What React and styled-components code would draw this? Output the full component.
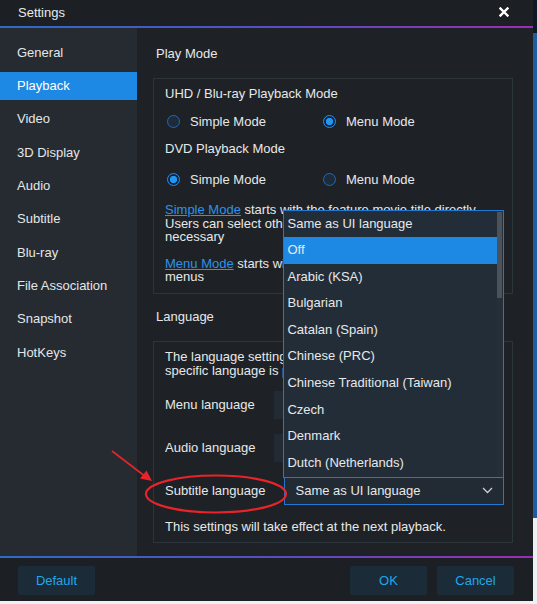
import React from 'react';
import styled, { createGlobalStyle } from 'styled-components';

const GlobalStyle = createGlobalStyle`
    html, body {
        margin: 0;
        padding: 0;
    }
    body {
        width: 537px;
        height: 604px;
        overflow: hidden;
        font-family: "Liberation Sans", Arial, sans-serif;
        background: linear-gradient(to bottom, #0f1826 0px, #0f1826 33px, #1f5c9f 33px, #1f5c9f 518px, #eef0f2 518px);
    }
`

const menuItems = ['General', 'Playback', 'Video', '3D Display', 'Audio', 'Subtitle', 'Blu-ray', 'File Association', 'Snapshot', 'HotKeys']

const languages = [
    'Same as UI language', 'Off', 'Arabic (KSA)', 'Bulgarian', 'Catalan (Spain)',
    'Chinese (PRC)', 'Chinese Traditional (Taiwan)', 'Czech', 'Denmark', 'Dutch (Netherlands)',
]

function Radio({ checked, label }) {
    return (
        <RadioOption>
            <RadioCircle checked={checked} />
            <span>{label}</span>
        </RadioOption>
    )
}

function App() {
    return (
        <>
            <GlobalStyle />
            <Page>
                <Window>
                    <TitleBar>
                        <span>Settings</span>
                        <svg width="10" height="10" viewBox="0 0 10 10">
                            <path d="M1.5 1.5 L8.5 8.5 M8.5 1.5 L1.5 8.5" stroke="#ffffff" strokeWidth="2.4" strokeLinecap="square" />
                        </svg>
                    </TitleBar>
                    <GradientLine />

                    <Body>
                        <Sidebar>
                            {menuItems.map((item) => (
                                <SideItem key={item} active={item === 'Playback'}>{item}</SideItem>
                            ))}
                        </Sidebar>

                        <Content>
                            <SectionTitle>Play Mode</SectionTitle>
                            <GroupBox>
                                <GroupLabel>UHD / Blu-ray Playback Mode</GroupLabel>
                                <RadioRow style={{ marginTop: 9 }}>
                                    <Radio label="Simple Mode" />
                                    <Radio checked label="Menu Mode" />
                                </RadioRow>
                                <GroupLabel style={{ marginTop: 10 }}>DVD Playback Mode</GroupLabel>
                                <RadioRow style={{ marginTop: 12 }}>
                                    <Radio checked label="Simple Mode" />
                                    <Radio label="Menu Mode" />
                                </RadioRow>
                                <Paragraph style={{ marginTop: 14 }}>
                                    <Link>Simple Mode</Link> starts with the feature movie title directly.<br />
                                    Users can select other titles from the menu when<br />
                                    necessary
                                </Paragraph>
                                <Paragraph style={{ marginTop: 13 }}>
                                    <Link>Menu Mode</Link> starts with the disc menu and all disc<br />
                                    menus
                                </Paragraph>
                            </GroupBox>

                            <SectionTitle style={{ marginTop: 15 }}>Language</SectionTitle>
                            <GroupBox compact>
                                <Paragraph lh={14}>
                                    The language settings apply when a disc with the<br />
                                    specific language is played.
                                </Paragraph>
                                <LangRow style={{ marginTop: 13 }}>
                                    <LangLabel>Menu language</LangLabel>
                                    <Select>Same as UI language</Select>
                                </LangRow>
                                <LangRow>
                                    <LangLabel>Audio language</LangLabel>
                                    <Select>Same as UI language</Select>
                                </LangRow>
                                <LangRow>
                                    <LangLabel>Subtitle language</LangLabel>
                                    <Select open>
                                        <span>Same as UI language</span>
                                        <svg width="11" height="7" viewBox="0 0 11 7">
                                            <path d="M1 1 L5.5 5.5 L10 1" fill="none" stroke="#c8ced4" strokeWidth="1.3" />
                                        </svg>
                                        <Dropdown>
                                            {languages.map((lang) => (
                                                <DropItem key={lang} active={lang === 'Off'}>{lang}</DropItem>
                                            ))}
                                            <ScrollTrack>
                                                <ScrollThumb />
                                            </ScrollTrack>
                                        </Dropdown>
                                    </Select>
                                </LangRow>
                                <Paragraph lh={14} style={{ marginTop: 15 }}>
                                    This settings will take effect at the next playback.
                                </Paragraph>
                            </GroupBox>
                        </Content>
                    </Body>

                    <GradientLine />
                    <Footer>
                        <FooterButton>Default</FooterButton>
                        <FooterRight>
                            <FooterButton>OK</FooterButton>
                            <FooterButton>Cancel</FooterButton>
                        </FooterRight>
                    </Footer>
                </Window>

                <Annotation width="537" height="604" viewBox="0 0 537 604">
                    <ellipse cx="216" cy="494" rx="70" ry="18.5" fill="none" stroke="#e8232a" strokeWidth="2.2" />
                    <path d="M112 451 L146 477" stroke="#e8232a" strokeWidth="1.6" />
                    <path d="M152 481 L140 478.5 L146.5 470.5 Z" fill="#e8232a" />
                </Annotation>
            </Page>
        </>
    )
}


const Page = styled.div`
    position: relative;
    width: 537px;
    height: 604px;
`

const Window = styled.div`
    width: 533px;
    height: 601px;
    display: flex;
    flex-direction: column;
    background-color: #1c2024;
    color: #e6e8ea;
    font-size: 13px;
`

const TitleBar = styled.div`
    height: 26px;
    display: flex;
    align-items: center;
    justify-content: space-between;
    padding: 0 24px 2px 18px;
    box-sizing: border-box;
    color: #e8eaec;
    font-size: 13px;
`

const GradientLine = styled.div`
    height: 2px;
    flex-shrink: 0;
    background: linear-gradient(to right, #2c6cc4, #5a4cc0 55%, #9b2db6);
`

const Body = styled.div`
    flex: 1;
    display: flex;
    min-height: 0;
`

const Sidebar = styled.div`
    width: 137px;
    flex-shrink: 0;
    background-color: #252b31;
    display: flex;
    flex-direction: column;
    gap: 5.33px;
    padding-top: 10.8px;
    box-sizing: border-box;
`

const SideItem = styled.div`
    height: 28px;
    line-height: 28px;
    padding-left: 17px;
    background-color: ${props => props.active ? '#1e88e5' : 'transparent'};
    color: ${props => props.active ? '#ffffff' : '#e4e6e8'};
`

const Content = styled.div`
    flex: 1;
    min-width: 0;
    background-color: #1e2226;
    padding: 18px 20px 0 16px;
    display: flex;
    flex-direction: column;
`

const SectionTitle = styled.div`
    height: 16px;
    line-height: 16px;
    margin-bottom: 16px;
    padding-left: 3px;
`

const GroupBox = styled.div`
    border: 1px solid #2c343c;
    padding: ${props => props.compact ? '8px 8px 8px 11px' : '7px 8px 9px 11px'};
    display: flex;
    flex-direction: column;
`

const GroupLabel = styled.div`
    height: 16px;
    line-height: 16px;
`

const RadioRow = styled.div`
    height: 20px;
    display: flex;
    align-items: center;
    padding-left: 2px;
`

const RadioOption = styled.div`
    width: 156px;
    display: flex;
    align-items: center;
    gap: 10px;
`

const RadioCircle = styled.span`
    width: 13px;
    height: 13px;
    box-sizing: border-box;
    border-radius: 50%;
    border: 1.5px solid ${props => props.checked ? '#2e8de8' : '#2a67a8'};
    background: ${props => props.checked
        ? 'radial-gradient(circle, #2196f3 0, #2196f3 3.4px, #1a2532 3.9px)'
        : '#1e2c3a'};
`

const Paragraph = styled.div`
    line-height: ${props => props.lh || 13.5}px;
    white-space: nowrap;
`

const Link = styled.span`
    color: #2a93ea;
    text-decoration: underline;
`

const LangRow = styled.div`
    height: 28px;
    margin-top: 15px;
    display: flex;
    align-items: center;
    gap: 19px;
`

const LangLabel = styled.div`
    white-space: nowrap;
`

const Select = styled.div`
    position: relative;
    flex: 1;
    height: 28px;
    box-sizing: border-box;
    display: flex;
    align-items: center;
    justify-content: space-between;
    padding: 0 10px 0 10px;
    background-color: #222a33;
    border: 1px solid ${props => props.open ? '#1f78d1' : '#222a33'};
`

const Dropdown = styled.div`
    position: absolute;
    left: -2px;
    right: -1px;
    bottom: 100%;
    height: 268px;
    box-sizing: border-box;
    border: 1px solid #1f78d1;
    background-color: #232d38;
    padding-right: 6px;
    z-index: 2;
`

const DropItem = styled.div`
    height: 26.6px;
    line-height: 26.6px;
    padding-left: 3px;
    white-space: nowrap;
    color: #e6e8ea;
    background-color: ${props => props.active ? '#1e88e5' : 'transparent'};
`

const ScrollTrack = styled.div`
    position: absolute;
    top: 0;
    right: 0;
    width: 6px;
    height: 100%;
    background-color: #262f39;
`

const ScrollThumb = styled.div`
    width: 5px;
    height: 86px;
    margin-top: 1px;
    background-color: #4b5259;
`

const Footer = styled.div`
    height: 43px;
    box-sizing: border-box;
    display: flex;
    justify-content: space-between;
    padding: 8px 19px 0 18px;
`

const FooterRight = styled.div`
    display: flex;
    gap: 10px;
`

const FooterButton = styled.div`
    width: 77px;
    height: 29px;
    line-height: 29px;
    text-align: center;
    background-color: #1c2b38;
    color: #1ba8ee;
    border-radius: 2px;
`

const Annotation = styled.svg`
    position: absolute;
    top: 0;
    left: 0;
    pointer-events: none;
    z-index: 5;
`

export default App
